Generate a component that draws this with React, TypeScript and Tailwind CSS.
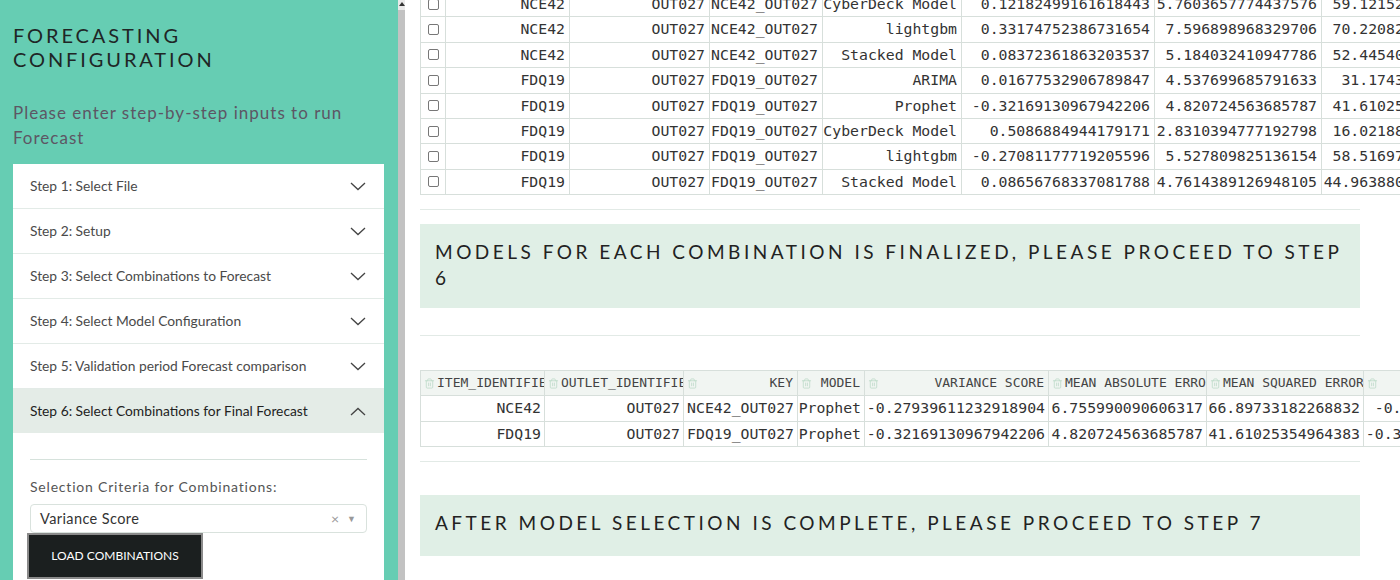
import React from 'react'
import { Trash2 } from 'lucide-react'

const steps = [
  'Step 1: Select File',
  'Step 2: Setup',
  'Step 3: Select Combinations to Forecast',
  'Step 4: Select Model Configuration',
  'Step 5: Validation period Forecast comparison',
]

const scored = [
  ['NCE42', 'OUT027', 'NCE42_OUT027', 'CyberDeck Model', '0.12182499161618443', '5.7603657774437576', '59.12152611803474'],
  ['NCE42', 'OUT027', 'NCE42_OUT027', 'lightgbm', '0.33174752386731654', '7.596898968329706', '70.22082547718845'],
  ['NCE42', 'OUT027', 'NCE42_OUT027', 'Stacked Model', '0.08372361863203537', '5.184032410947786', '52.44540162874129'],
  ['FDQ19', 'OUT027', 'FDQ19_OUT027', 'ARIMA', '0.01677532906789847', '4.537699685791633', '31.1743560928364'],
  ['FDQ19', 'OUT027', 'FDQ19_OUT027', 'Prophet', '-0.32169130967942206', '4.820724563685787', '41.61025354964383'],
  ['FDQ19', 'OUT027', 'FDQ19_OUT027', 'CyberDeck Model', '0.5086884944179171', '2.8310394777192798', '16.02188742953616'],
  ['FDQ19', 'OUT027', 'FDQ19_OUT027', 'lightgbm', '-0.27081177719205596', '5.527809825136154', '58.51697304183329'],
  ['FDQ19', 'OUT027', 'FDQ19_OUT027', 'Stacked Model', '0.08656768337081788', '4.7614389126948105', '44.963880215477043'],
]

const finalHeaders = ['ITEM_IDENTIFIER', 'OUTLET_IDENTIFIER', 'KEY', 'MODEL', 'VARIANCE SCORE', 'MEAN ABSOLUTE ERROR', 'MEAN SQUARED ERROR', 'R2 SCORE']

const finalRows = [
  ['NCE42', 'OUT027', 'NCE42_OUT027', 'Prophet', '-0.27939611232918904', '6.755990090606317', '66.89733182268832', '-0.2793961123291890'],
  ['FDQ19', 'OUT027', 'FDQ19_OUT027', 'Prophet', '-0.32169130967942206', '4.820724563685787', '41.61025354964383', '-0.32169130967942206'],
]

const mono = "font-['DejaVu_Sans_Mono',monospace]"
const sans = "font-['Lato','Noto_Sans',sans-serif]"

function Chevron({ up }: { up?: boolean }) {
  return (
    <svg width="16" height="9" viewBox="0 0 16 9" fill="none" stroke="#444" strokeWidth="1.3">
      {up ? <path d="M1 8 L8 1.5 L15 8" /> : <path d="M1 1 L8 7.5 L15 1" />}
    </svg>
  )
}

export default function App() {
  return (
    <div className="flex h-[580px] w-[1400px] overflow-hidden bg-white">

      {/* Sidebar */}
      <aside className={`w-[398px] shrink-0 bg-[#66cdb3] pl-[13px] pr-[14px] ${sans}`}>
        <h1 className="pt-[23px] text-[20px] leading-[24px] tracking-[2.9px] text-[#1f2626]">
          FORECASTING<br />CONFIGURATION
        </h1>
        <p className="mt-[29px] text-[17px] leading-[25px] tracking-[1px] text-[#5d5664]">
          Please enter step-by-step inputs to run Forecast
        </p>

        <div className="mt-[14px] bg-white">
          {steps.map((s) => (
            <div key={s} className="flex h-[45px] items-center justify-between border-b border-[#e3ebe7] pl-[17px] pr-[18px]">
              <span className="text-[13.8px] text-[#4a4a4a]">{s}</span>
              <Chevron />
            </div>
          ))}
          <div className="flex h-[44px] items-center justify-between bg-[#e4ece7] pl-[17px] pr-[18px]">
            <span className="text-[13.8px] text-[#222]">Step 6: Select Combinations for Final Forecast</span>
            <Chevron up />
          </div>

          {/* Expanded body */}
          <div className="px-[17px] pt-[26px] pb-[20px]">
            <div className="h-px bg-[#d6e2dc]" />
            <div className="mt-[16px] text-[14px] tracking-[0.8px] text-[#555]">
              Selection Criteria for Combinations:
            </div>
            <div className="mt-[7px] flex h-[29px] items-center justify-between rounded-[4px] border border-[#d9e2dd] pl-[9px] pr-[10px]">
              <span className="text-[14.5px] tracking-[0.4px] text-[#333]">Variance Score</span>
              <span className="flex items-center gap-[8px] text-[#999]">
                <span className="text-[14px] leading-none">×</span>
                <span className="text-[9px] leading-none">▼</span>
              </span>
            </div>
            <button className="-ml-[3px] flex h-[46px] w-[176px] items-center justify-center border-2 border-[#8a8a8a] bg-[#1b1f1f] text-[12px] text-white">
              LOAD COMBINATIONS
            </button>
          </div>
        </div>
      </aside>

      {/* Scrollbar */}
      <div className="flex w-[7px] shrink-0 flex-col bg-[#c2c2c2]">
        <div className="flex h-[10px] items-start justify-center bg-[#e9e9e9] pt-[2px]">
          <span className="block h-0 w-0 border-x-[3px] border-b-[4px] border-x-transparent border-b-[#333]" />
        </div>
      </div>

      {/* Main */}
      <main className="min-w-0 flex-1 overflow-hidden pl-[15px]">

        {/* Scored combinations table */}
        <div className={`-mt-[9px] grid w-max grid-cols-[25px_124px_140px_113px_139px_193px_167px_167px] border-l border-t border-[#d7dfdb] text-[14.8px] text-[#333] ${mono}`}>
          {scored.map((r, i) => (
            <React.Fragment key={i}>
              <div className="flex h-[25.4px] items-center justify-center border-b border-r border-[#d7dfdb]">
                <span className="block h-[11px] w-[11px] rounded-[2px] border border-[#777] bg-white" />
              </div>
              {r.map((c, j) => (
                <div key={j} className="flex h-[25.4px] items-center justify-end overflow-hidden whitespace-nowrap border-b border-r border-[#d7dfdb] pr-[4px]">
                  {c}
                </div>
              ))}
            </React.Fragment>
          ))}
        </div>

        <div className="mt-[14px] h-px w-[940px] bg-[#e2eae6]" />
        <div className={`mt-[14px] w-[940px] bg-[#e0efe6] pl-[15px] pr-[15px] pt-[15px] pb-[17px] text-[19px] leading-[26px] tracking-[3.5px] text-[#222] ${sans}`}>
          MODELS FOR EACH COMBINATION IS FINALIZED, PLEASE PROCEED TO STEP 6
        </div>
        <div className="mt-[27px] h-px w-[940px] bg-[#e2eae6]" />

        {/* Final selection table */}
        <div className={`mt-[34px] grid w-max grid-cols-[124px_139px_114px_67px_184px_158px_157px_184px] border-l border-t border-[#d7dfdb] text-[#333] ${mono}`}>
          {finalHeaders.map((h, j) => (
            <div key={h} className={`flex h-[25px] items-center overflow-hidden whitespace-nowrap border-b border-r border-[#d7dfdb] bg-[#f1f5f2] pl-[3px] pr-[4px] text-[13px] text-[#444] ${j < 2 ? 'justify-start' : 'justify-between'}`}>
              <Trash2 size={11} strokeWidth={1.6} className="mr-[2px] shrink-0 text-[#b9d8c6]" />
              <span className={j < 2 ? '' : 'ml-auto'}>{h}</span>
            </div>
          ))}
          {finalRows.map((r, i) => (
            <React.Fragment key={i}>
              {r.map((c, j) => (
                <div key={j} className="flex h-[25.5px] items-center justify-end overflow-hidden whitespace-nowrap border-b border-r border-[#d7dfdb] pr-[3px] text-[14.8px]">
                  {c}
                </div>
              ))}
            </React.Fragment>
          ))}
        </div>

        <div className="mt-[14px] h-px w-[940px] bg-[#e2eae6]" />
        <div className={`mt-[33px] w-[940px] bg-[#e0efe6] pl-[15px] pr-[15px] pt-[15px] pb-[20px] text-[19px] leading-[26px] tracking-[3.5px] text-[#222] ${sans}`}>
          AFTER MODEL SELECTION IS COMPLETE, PLEASE PROCEED TO STEP 7
        </div>
      </main>
    </div>
  )
}
